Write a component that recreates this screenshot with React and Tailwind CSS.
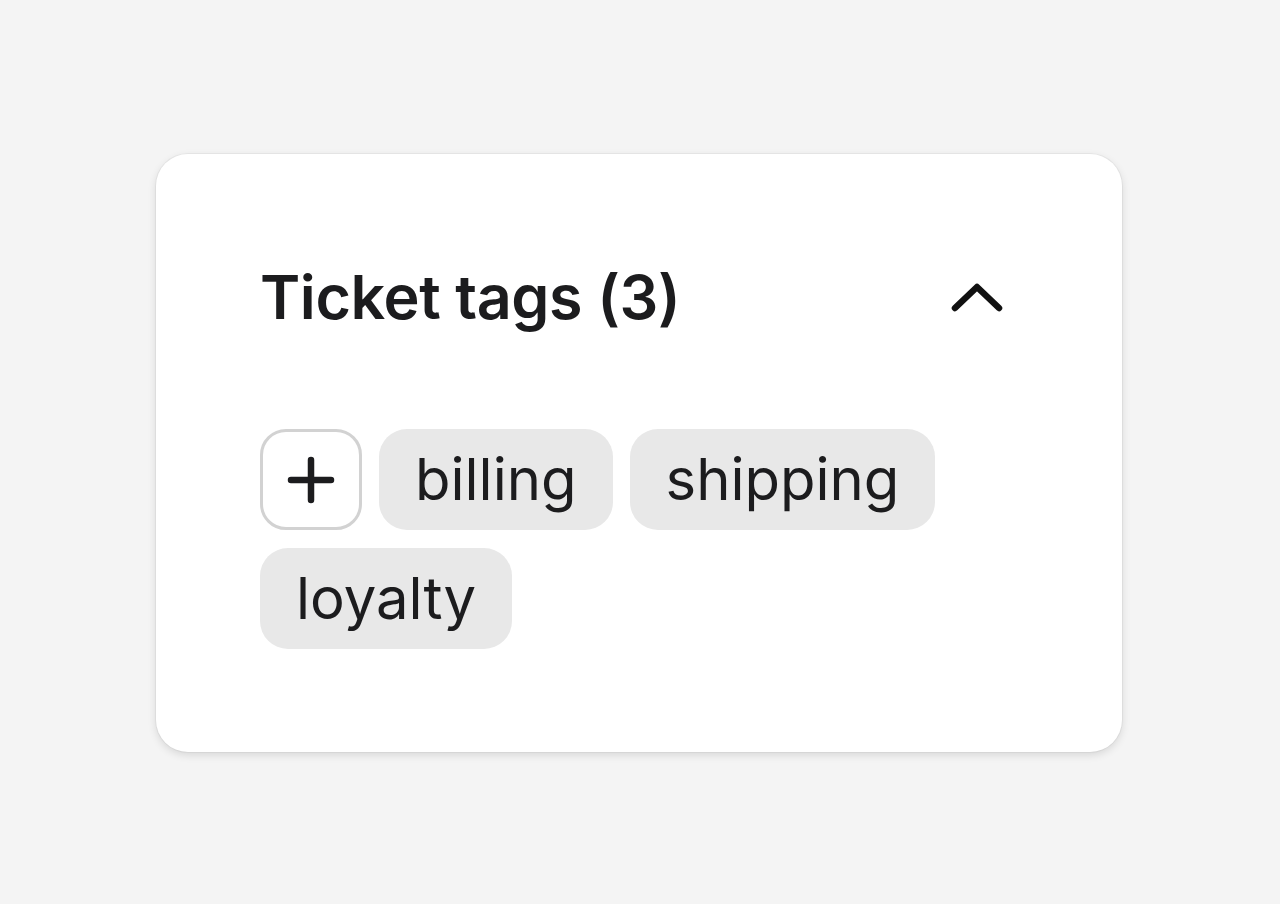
import React from "react";

export default function App() {
  const tags = ["billing", "shipping", "loyalty"];
  return (
    <div className="w-[1280px] h-[904px] bg-[#f4f4f4] flex items-start justify-start pt-[154px] pl-[156px]" style={{ fontFamily: "Inter, 'Noto Sans', sans-serif" }}>
      <div className="w-[966px] h-[598px] bg-white rounded-[32px] shadow-[0_0_0_1px_rgba(0,0,0,0.04),0_3px_8px_rgba(0,0,0,0.12)] px-[104px] pt-[104px] pb-[104px] flex flex-col">
        <div className="flex items-center justify-between h-[78px]">
          <h2 className="text-[61px] leading-[78px] font-semibold text-[#1c1c1e] tracking-[-0.4px]">Ticket tags (3)</h2>
          <svg width="52" height="32" viewBox="0 0 52 32" className="mr-[15px]" fill="none">
            <polyline points="4,27 26,6 48,27" stroke="#111" strokeWidth="6.5" strokeLinecap="round" strokeLinejoin="round" />
          </svg>
        </div>
        <div className="mt-[93px] flex flex-wrap gap-x-[17px] gap-y-[18px]">
          <button className="w-[102px] h-[101px] rounded-[26px] border-[3px] border-[#d2d2d2] bg-white flex items-center justify-center">
            <svg width="48" height="48" viewBox="0 0 48 48" fill="none">
              <path d="M24 4V44M4 24H44" stroke="#1c1c1e" strokeWidth="6.5" strokeLinecap="round" />
            </svg>
          </button>
          {tags.map((t) => (
            <span key={t} className="h-[101px] px-[36px] rounded-[28px] bg-[#e8e8e8] text-[58px] leading-[101px] text-[#1c1c1e] font-normal">
              {t}
            </span>
          ))}
        </div>
      </div>
    </div>
  );
}
